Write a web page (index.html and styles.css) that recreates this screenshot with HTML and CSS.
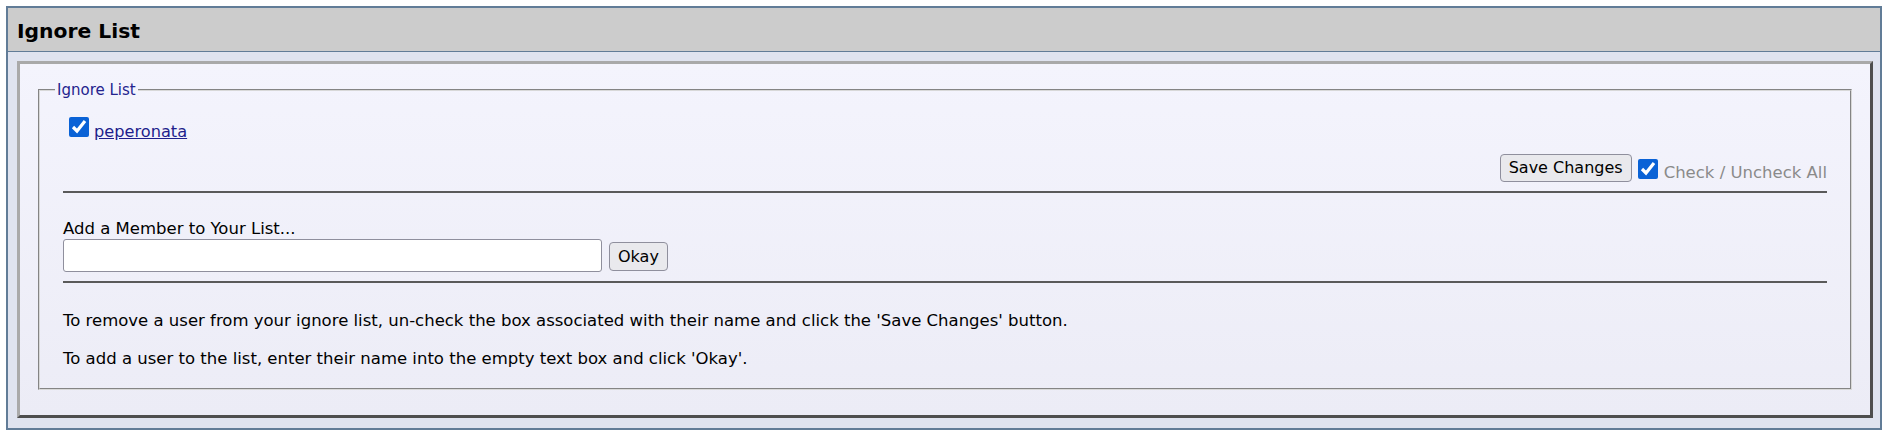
FILE: index.html
```html
<!DOCTYPE html>
<html lang="en">
<head>
<meta charset="utf-8">
<title>Ignore List</title>
<link rel="stylesheet" href="styles.css">
</head>
<body>
<div class="panel">
  <div class="panel-head">Ignore List</div>
  <div class="panel-body">
    <div class="box">
      <fieldset class="group">
        <legend class="group-title">Ignore List</legend>
        <div class="entry">
          <input class="check" type="checkbox" checked>
          <a class="member" href="#">peperonata</a>
        </div>
        <div class="actions">
          <button class="btn" type="button">Save Changes</button>
          <input class="check check-all" type="checkbox" checked>
          <span class="check-label">Check / Uncheck All</span>
        </div>
        <hr class="rule">
        <div class="add-label">Add a Member to Your List...</div>
        <div class="add-row">
          <input class="field" type="text">
          <button class="btn" type="button">Okay</button>
        </div>
        <hr class="rule rule-2">
        <p class="note">To remove a user from your ignore list, un-check the box associated with their name and click the 'Save Changes' button.</p>
        <p class="note note-2">To add a user to the list, enter their name into the empty text box and click 'Okay'.</p>
      </fieldset>
    </div>
  </div>
</div>
</body>
</html>
```
FILE: styles.css
```css
html, body {
  margin: 0;
  padding: 0;
  background: #ffffff;
}
body {
  padding: 6px 4px 2px 6px;
  font-family: "DejaVu Sans", Verdana, sans-serif;
  font-size: 16.5px;
  color: #000;
}
.panel {
  border: 2px solid #617c97;
  background: #dfe3ef;
}
.panel-head {
  background: #cccccc;
  border-bottom: 1px solid #617c97;
  height: 24px;
  padding: 11px 9px 8px;
  line-height: 24px;
  font-size: 20.3px;
  font-weight: bold;
}
.panel-body {
  padding: 9px 7px 10px 9px;
}
.box {
  border-style: solid;
  border-width: 3px;
  border-color: #a9a9a9 #4e4e4e #4e4e4e #a9a9a9;
  background: linear-gradient(#f4f4fd, #ececf6);
  padding: 17px 18px 25px;
}
.group {
  margin: 0;
  padding: 0 23px 19px;
  border: 2px groove #d8d8d8;
  min-width: 0;
}
.group-title {
  padding: 0 2px;
  margin-left: -8px;
  font-size: 15px;
  line-height: 18px;
  color: #24248e;
}
.entry {
  display: flex;
  align-items: baseline;
  margin-top: 18px;
  line-height: 20px;
}
.check {
  width: 20px;
  height: 20px;
  margin: 0 5px 0 6px;
  accent-color: #0a62d6;
}
.member {
  font-size: 16.2px;
  color: #1e1e8c;
}
.actions {
  display: flex;
  justify-content: flex-end;
  align-items: flex-end;
  margin-top: 12px;
}
.btn {
  font-family: "DejaVu Sans", Verdana, sans-serif;
  font-size: 16px;
  color: #000;
  background: #e9e9ed;
  border: 1px solid #8f8f9d;
  border-radius: 4px;
  padding: 0 8px;
  height: 28px;
  line-height: 26px;
}
.check-all {
  margin: 0 6px 3px 6px;
}
.check-label {
  color: #8a8a8a;
  line-height: 20px;
  margin-bottom: -1px;
}
.rule {
  border: 0;
  border-top: 2px solid #5a5a5a;
  margin: 9px 0 0;
  height: 0;
}
.add-label {
  margin-top: 26px;
  line-height: 20px;
}
.add-row {
  display: flex;
  align-items: center;
  gap: 7px;
}
.field {
  width: 539px;
  height: 33px;
  box-sizing: border-box;
  border: 1px solid #8f8f9d;
  border-radius: 3px;
  background: #fff;
  margin: 0;
}
.add-row .btn {
  height: 29px;
  margin-top: 2px;
}
.note {
  margin: 28px 0 0;
  line-height: 20px;
}
.note-2 {
  margin-top: 18px;
}
```
